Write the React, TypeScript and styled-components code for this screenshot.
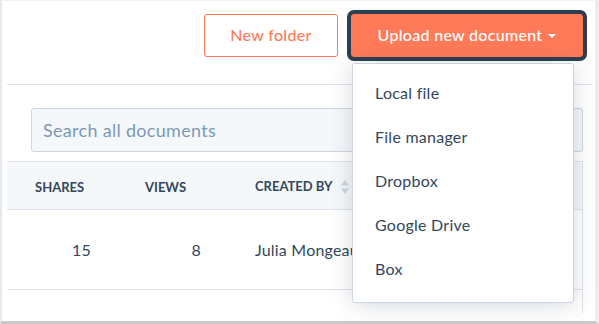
import styled, { createGlobalStyle } from "styled-components";

const GlobalStyle = createGlobalStyle`
  html, body {
    margin: 0;
    padding: 0;
    background: #fff;
  }
  body {
    font-family: Lato, "Open Sans", sans-serif;
    color: #33475b;
  }
  * {
    box-sizing: border-box;
  }
`;

const Frame = styled.div`
  width: 599px;
  height: 324px;
  display: flex;
  flex-direction: column;
  background: #fff;
  border-left: 2px solid #e9e9e9;
  border-top: 1px solid #f1f1f1;
  border-right: 4px solid #ededed;
  border-bottom: 3px solid #c9c9c9;
  overflow: hidden;
`;

const TopBar = styled.div`
  height: 84px;
  margin: 0 3px 0 5px;
  padding: 13px 5px 0 0;
  display: flex;
  justify-content: flex-end;
  align-items: flex-start;
  gap: 13px;
  border-bottom: 1px solid #dfe3eb;
`;

const Button = styled.button<{ $primary?: boolean }>`
  height: 43px;
  width: ${(p) => (p.$primary ? "232px" : "134px")};
  padding: 0 0 2px;
  border-radius: 3px;
  font-family: inherit;
  font-size: 16px;
  font-weight: 500;
  letter-spacing: 0.3px;
  display: flex;
  align-items: center;
  justify-content: center;
  gap: 6px;
  cursor: pointer;
  border: 1px solid #ff7a59;
  background: ${(p) => (p.$primary ? "#ff7a59" : "#fff")};
  color: ${(p) => (p.$primary ? "#fff" : "#ff7a59")};
  box-shadow: ${(p) => (p.$primary ? "0 0 0 4px #2d3e50" : "none")};
`;

const Caret = styled.span`
  width: 0;
  height: 0;
  border-left: 4.5px solid transparent;
  border-right: 4.5px solid transparent;
  border-top: 4.5px solid #fff;
  margin-top: 2px;
`;

const UploadWrap = styled.div`
  position: relative;
  margin-right: 4px;
`;

const Menu = styled.ul`
  position: absolute;
  top: 49px;
  left: 1px;
  width: 222px;
  margin: 0;
  padding: 6px 0 12px;
  list-style: none;
  background: #fff;
  border: 1px solid #cbd6e2;
  border-radius: 3px;
  box-shadow: 0 2px 22px rgba(45, 62, 80, 0.2);
  z-index: 10;
`;

const MenuItem = styled.li`
  height: 44px;
  padding-left: 22px;
  display: flex;
  align-items: center;
  font-size: 16px;
  letter-spacing: 0.25px;
  color: #33475b;
`;

const Body = styled.div`
  flex: 1;
  margin: 0 12px 0 5px;
  display: flex;
  flex-direction: column;
`;

const Search = styled.input`
  margin: 23px 0 0 24px;
  height: 44px;
  padding: 0 11px;
  border: 1px solid #cbd6e2;
  border-radius: 3px;
  background: #f5f8fa;
  font-family: inherit;
  font-size: 18px;
  letter-spacing: 0.3px;
  color: #33475b;
  outline: none;
  &::placeholder {
    color: #7c98b6;
  }
`;

const TableWrap = styled.div`
  flex: 1;
  margin-top: 9px;
  margin-bottom: 8px;
  border-right: 1px solid #dfe3eb;
`;

const Table = styled.table`
  width: 100%;
  border-collapse: collapse;
`;

const Th = styled.th<{ $width?: number }>`
  height: 48px;
  width: ${(p) => (p.$width ? `${p.$width}px` : "auto")};
  padding: 2px 0 0 28px;
  text-align: left;
  background: #f5f8fa;
  border-top: 1px solid #dfe3eb;
  border-bottom: 1px solid #dfe3eb;
  font-size: 13px;
  font-weight: 700;
  text-transform: uppercase;
  color: #33475b;
  white-space: nowrap;
`;

const SortIcon = styled.svg`
  margin-left: 8px;
  vertical-align: middle;
`;

const Td = styled.td<{ $numeric?: boolean }>`
  height: 80px;
  padding: ${(p) => (p.$numeric ? "0 26px 0 0" : "0 0 0 28px")};
  text-align: ${(p) => (p.$numeric ? "right" : "left")};
  border-bottom: 1px solid #dfe3eb;
  font-size: 16px;
  letter-spacing: 0.2px;
  color: #33475b;
  white-space: nowrap;
`;

const menuItems = ["Local file", "File manager", "Dropbox", "Google Drive", "Box"];

export default function App() {
  return (
    <>
      <GlobalStyle />
      <Frame>
        <TopBar>
          <Button>New folder</Button>
          <UploadWrap>
            <Button $primary>
              Upload new document
              <Caret />
            </Button>
            <Menu>
              {menuItems.map((item) => (
                <MenuItem key={item}>{item}</MenuItem>
              ))}
            </Menu>
          </UploadWrap>
        </TopBar>
        <Body>
          <Search placeholder="Search all documents" />
          <TableWrap>
            <Table>
              <thead>
                <tr>
                  <Th $width={110}>Shares</Th>
                  <Th $width={110}>Views</Th>
                  <Th>
                    Created by
                    <SortIcon width="8" height="16" viewBox="0 0 8 16">
                      <path d="M4 1 L8 6.5 H0 Z" fill="#cbd6e2" />
                      <path d="M4 15 L8 9.5 H0 Z" fill="#cbd6e2" />
                    </SortIcon>
                  </Th>
                </tr>
              </thead>
              <tbody>
                <tr>
                  <Td $numeric>15</Td>
                  <Td $numeric>8</Td>
                  <Td>Julia Mongeau</Td>
                </tr>
              </tbody>
            </Table>
          </TableWrap>
        </Body>
      </Frame>
    </>
  );
}
